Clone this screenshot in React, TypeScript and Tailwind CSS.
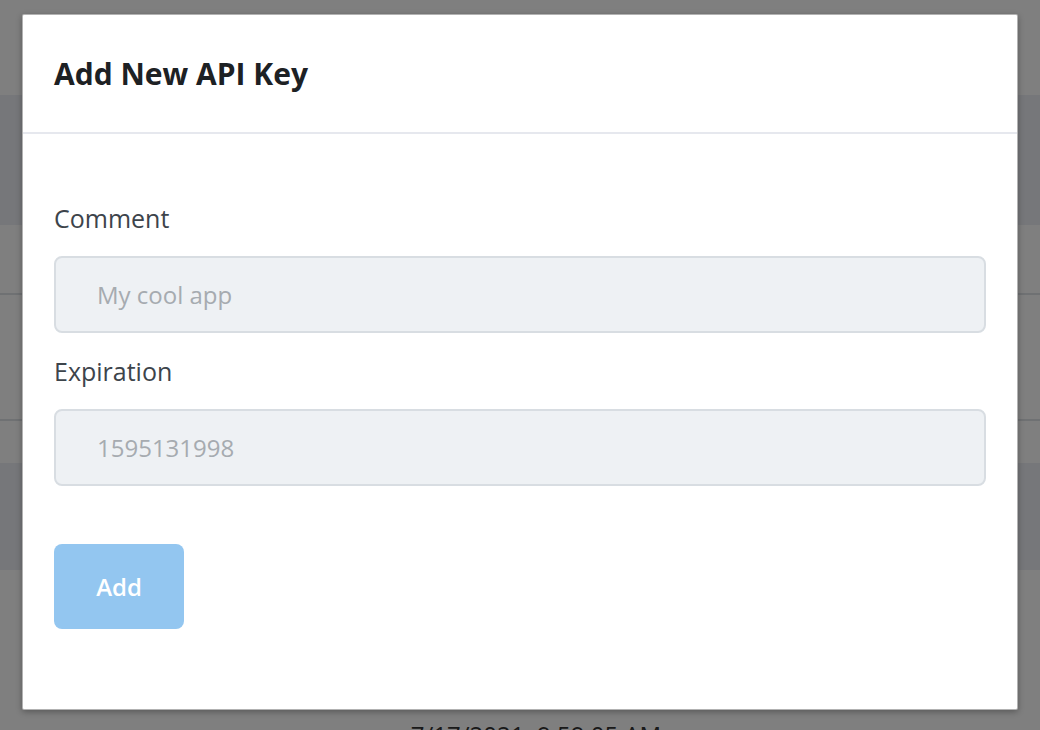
import React from 'react';

const font = { fontFamily: '"Open Sans", "Noto Sans", sans-serif' };

const Field = ({ label, placeholder, top }: { label: string; placeholder: string; top: string }) => (
  <div className={top}>
    <label className="block h-[36px] text-[25px] leading-[36px] text-[#3d444b]">{label}</label>
    <input
      disabled
      placeholder={placeholder}
      className="mt-[20px] block h-[77px] w-full rounded-[8px] border-2 border-[#d8dde2] bg-[#eef1f4] pl-[41px] text-[24px] text-[#a6abb0] placeholder:text-[#a6abb0] outline-none"
    />
  </div>
);

export default function App() {
  return (
    <div className="relative h-[730px] w-full overflow-hidden bg-white" style={font}>
      {/* page behind the dialog */}
      <div className="flex h-full flex-col">
        <div className="h-[95px] shrink-0" />
        <div className="h-[130px] shrink-0 bg-[#eceef4]" />
        <div className="h-[70px] shrink-0 border-b-2 border-[#dee2e6]" />
        <div className="h-[126px] shrink-0 border-b-2 border-[#dee2e6]" />
        <div className="h-[42px] shrink-0" />
        <div className="h-[107px] shrink-0 bg-[#eceef4]" />
        <div className="h-[160px] shrink-0 pl-[32px] pt-[147px] text-center text-[24px] leading-[36px] text-[#333]">
          7/17/2021, 9:59:05 AM
        </div>
      </div>

      <div className="absolute inset-0 bg-black/50" />

      <div className="absolute left-[22px] top-[14px] h-[696px] w-[996px] rounded-[2px] border border-black/30 bg-white shadow-[0_2px_6px_rgba(0,0,0,0.3)]">
        <div className="flex h-[119px] items-center border-b-2 border-[#e6e8ee] px-[31px]">
          <h2 className="text-[30px] font-bold text-[#1d2124]">Add New API Key</h2>
        </div>
        <div className="px-[31px] pt-[66px]">
          <Field label="Comment" placeholder="My cool app" top="" />
          <Field label="Expiration" placeholder="1595131998" top="mt-[20px]" />
          <button
            disabled
            className="mt-[58px] flex h-[85px] w-[130px] items-center justify-center rounded-[8px] bg-[#93c6f0] text-[24px] font-semibold text-white"
          >
            Add
          </button>
        </div>
      </div>
    </div>
  );
}
